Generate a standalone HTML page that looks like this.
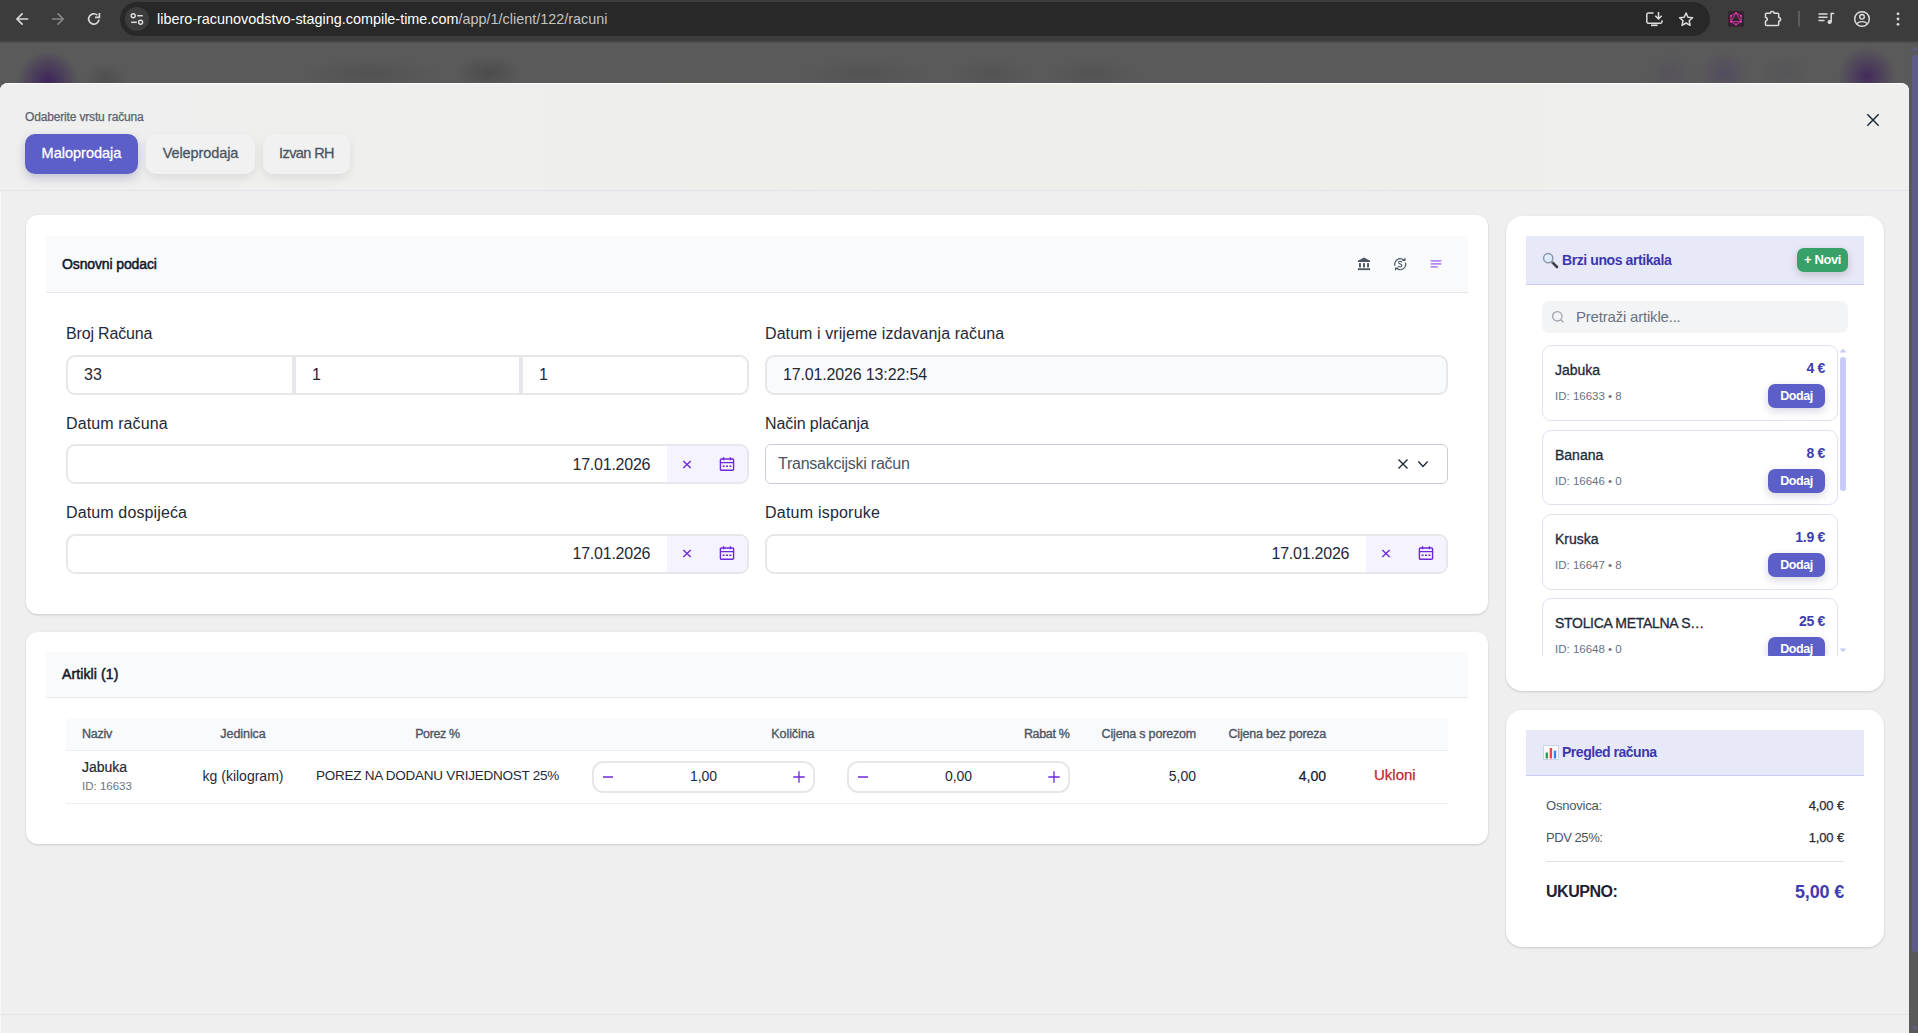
<!DOCTYPE html>
<html lang="hr">
<head>
<meta charset="utf-8">
<title>Računi</title>
<style>
*{box-sizing:border-box;margin:0;padding:0}
html,body{width:1918px;height:1033px;overflow:hidden;background:#5a5a5a}
body{font-family:"Liberation Sans",sans-serif;color:#1f2937;position:relative;-webkit-font-smoothing:antialiased}
.abs{position:absolute}
.t{position:absolute;white-space:nowrap;line-height:1}
/* browser chrome */
#chrome{left:0;top:0;width:1918px;height:41px;background:#3c3c3c}
#chromeline{left:0;top:41px;width:1918px;height:2px;background:linear-gradient(#454545,#505050)}
#urlpill{left:120px;top:2px;width:1590px;height:34px;border-radius:17px;background:#282828}
#sitecirc{left:125px;top:7px;width:24px;height:24px;border-radius:12px;background:#3c3c3c}
#url{left:157px;top:12px;font-size:14.400px;color:#c4c4c4;letter-spacing:0}
#url b{font-weight:normal;color:#fff}
/* page backdrop */
#backdrop{left:0;top:43px;width:1910px;height:990px;background:#5a5a5a;overflow:hidden}
#sbtrack{left:1910px;top:43px;width:8px;height:990px;background:#595959}
#sbthumb{left:1912px;top:55px;width:6px;height:897px;background:#5e5c89;border-radius:3px 0 0 3px}
/* modal */
#modal{left:0;top:83px;width:1909px;height:950px;background:#efefef;border-radius:8px 8px 0 0;overflow:hidden;box-shadow:inset 0 1px 0 rgba(255,255,255,.9),inset 1px 0 0 rgba(255,255,255,.5)}
#mhead{left:0;top:1px;width:1909px;height:107px;background:linear-gradient(90deg,#efefef,#eeeeea 60%,#efefee);border-bottom:1px solid #e2e4ea}
.card{position:absolute;background:#fff;border-radius:12px;box-shadow:0 1px 3px rgba(0,0,0,.10),0 1px 2px rgba(0,0,0,.06)}
.chead{position:absolute;background:#f9fafb;border-bottom:1px solid #e5e7eb}
.ihead{position:absolute;background:#e8e9f8;border-bottom:1px solid #c9ccf2}
.inp{position:absolute;border:2px solid #e5e7eb;background:#fff;border-radius:9px}
.lbl{font-size:16px;color:#1f2937}
.val{font-size:16px;color:#1f2937}
.btn{position:absolute;border-radius:10px;height:40px;top:51px;font-size:14.500px;line-height:38px;text-align:center;white-space:nowrap}
.dt{overflow:hidden}
.dtr{position:absolute;right:0;top:0;width:80px;height:36px;background:#f5f3ff}
.th{font-size:12.500px;font-weight:normal;color:#4b5563;-webkit-text-stroke:0.35px #4b5563}
.ctr{transform:translateX(-50%)}
.rgt{left:auto}
.item{position:absolute;left:0;width:296px;height:75.600px;border:1px solid #e0e1f1;border-radius:9px;background:#fff}
.dodaj{position:absolute;right:12px;top:38px;width:57px;height:24px;border-radius:7px;background:#5b5fc7;color:#fff;font-size:12.500px;font-weight:bold;line-height:24px;text-align:center;letter-spacing:-0.45px;box-shadow:0 3px 8px rgba(60,60,120,.22)}
</style>
</head>
<body>
<div id="chrome" class="abs"></div>
<div id="chromeline" class="abs"></div>
<div id="urlpill" class="abs"></div>
<div id="sitecirc" class="abs"></div>
<svg class="abs" style="left:0;top:0" width="1918" height="41" viewBox="0 0 1918 41" fill="none" stroke-linecap="butt">
  <!-- back -->
  <path d="M28.200 19H17.600M22.600 13.400L17 19l5.600 5.600" stroke="#d6d6d6" stroke-width="1.700"/>
  <!-- forward -->
  <path d="M52 19h10.600M57.600 13.400L63.200 19l-5.600 5.600" stroke="#858585" stroke-width="1.700"/>
  <!-- reload -->
  <path d="M99 19.600A5.200 5.200 0 1 1 97.300 15.100" stroke="#d9d9d9" stroke-width="1.700"/>
  <path d="M99.400 13v4.400h-4.400" stroke="#d9d9d9" stroke-width="1.700"/>
  <!-- tune -->
  <circle cx="133.200" cy="15.700" r="2" stroke="#e0e0e0" stroke-width="1.400"/><path d="M137.200 15.700h5.600" stroke="#e0e0e0" stroke-width="1.500"/>
  <circle cx="140.600" cy="22.300" r="2" stroke="#e0e0e0" stroke-width="1.400"/><path d="M131.200 22.300h5.600" stroke="#e0e0e0" stroke-width="1.500"/>
  <!-- install -->
  <path d="M1653.500 13h-5.300a1.400 1.400 0 0 0-1.400 1.400v7.400a1.400 1.400 0 0 0 1.400 1.400h12.400a1.400 1.400 0 0 0 1.400-1.400v-1.600" stroke="#dcdcdc" stroke-width="1.500"/>
  <path d="M1651 25.300h6.600" stroke="#dcdcdc" stroke-width="1.700"/>
  <path d="M1658.500 12v6.600M1655.300 15.800l3.200 3.200 3.200-3.200" stroke="#dcdcdc" stroke-width="1.500"/>
  <!-- star -->
  <path d="M1686.100 13l1.900 4.200 4.600 0.500-3.400 3.100 0.950 4.500-4.050-2.300-4.050 2.300 0.950-4.500-3.400-3.100 4.600-0.500z" stroke="#dcdcdc" stroke-width="1.500" stroke-linejoin="round"/>
  <!-- graphql ext -->
  <rect x="1728" y="11" width="16" height="16" rx="1.500" fill="#33252f" stroke="none"/>
  <path d="M1736 13l5 8.700h-10zM1736 13l5 2.900v5.800l-5 2.900-5-2.900v-5.800z" stroke="#e535ab" stroke-width="0.900"/>
  <g fill="#e535ab" stroke="none"><circle cx="1736" cy="13" r="1.100"/><circle cx="1741" cy="15.900" r="1.100"/><circle cx="1741" cy="21.700" r="1.100"/><circle cx="1736" cy="24.600" r="1.100"/><circle cx="1731" cy="21.700" r="1.100"/><circle cx="1731" cy="15.900" r="1.100"/></g>
  <!-- puzzle -->
  <path d="M1770.300 13.300a1.900 1.900 0 0 1 3.800 0h3.600a1 1 0 0 1 1 1v3.100a1.900 1.900 0 0 1 0 3.800v3.300a1 1 0 0 1-1 1h-11.200a1 1 0 0 1-1-1v-3.500a1.800 1.800 0 0 0 0-3.600v-3.100a1 1 0 0 1 1-1z" stroke="#dcdcdc" stroke-width="1.500" stroke-linejoin="round"/>
  <!-- separator -->
  <path d="M1799 11v15.600" stroke="#686868" stroke-width="1.500"/>
  <!-- queue music -->
  <path d="M1818.500 14h9M1818.500 17.300h9M1818.500 20.600h6" stroke="#dcdcdc" stroke-width="1.500"/>
  <path d="M1831.200 22V13.600h3" stroke="#dcdcdc" stroke-width="1.500"/>
  <circle cx="1829.600" cy="22" r="2.100" fill="#dcdcdc" stroke="none"/>
  <!-- profile -->
  <circle cx="1862" cy="19" r="7.300" stroke="#dcdcdc" stroke-width="1.500"/>
  <circle cx="1862" cy="16.800" r="2.300" stroke="#dcdcdc" stroke-width="1.400"/>
  <path d="M1856.600 23.800c1.400-1.500 3.300-2.200 5.400-2.200s4 0.700 5.400 2.200" stroke="#dcdcdc" stroke-width="1.400"/>
  <!-- kebab -->
  <g fill="#dcdcdc" stroke="none"><circle cx="1898" cy="13.800" r="1.400"/><circle cx="1898" cy="19" r="1.400"/><circle cx="1898" cy="24.300" r="1.400"/></g>
</svg>
<div id="url" class="t"><b>libero-racunovodstvo-staging.compile-time.com</b>/app/1/client/122/racuni</div>
<div id="backdrop" class="abs">
  <div class="abs" style="left:17px;top:8px;width:62px;height:62px;background:radial-gradient(closest-side,rgba(60,34,90,.95),rgba(60,34,90,.6) 40%,rgba(60,34,90,0))"></div>
  <div class="abs" style="left:84px;top:20px;width:44px;height:34px;background:radial-gradient(closest-side,rgba(74,74,74,.7),rgba(74,74,74,0))"></div>
  <div class="abs" style="left:300px;top:16px;width:140px;height:30px;background:radial-gradient(closest-side,rgba(78,78,78,.7),rgba(78,78,78,0))"></div>
  <div class="abs" style="left:455px;top:12px;width:66px;height:36px;background:radial-gradient(closest-side,rgba(74,74,74,.9),rgba(74,74,74,0))"></div>
  <div class="abs" style="left:800px;top:16px;width:130px;height:30px;background:radial-gradient(closest-side,rgba(80,80,80,.7),rgba(80,80,80,0))"></div>
  <div class="abs" style="left:950px;top:16px;width:80px;height:30px;background:radial-gradient(closest-side,rgba(80,80,80,.7),rgba(80,80,80,0))"></div>
  <div class="abs" style="left:1045px;top:16px;width:95px;height:30px;background:radial-gradient(closest-side,rgba(80,80,80,.7),rgba(80,80,80,0))"></div>
  <div class="abs" style="left:1645px;top:10px;width:50px;height:40px;background:radial-gradient(closest-side,rgba(84,80,90,.7),rgba(84,80,90,0))"></div>
  <div class="abs" style="left:1700px;top:8px;width:50px;height:44px;background:radial-gradient(closest-side,rgba(82,72,96,.8),rgba(82,72,96,0))"></div>
  <div class="abs" style="left:1760px;top:12px;width:50px;height:36px;background:radial-gradient(closest-side,rgba(84,82,86,.7),rgba(84,82,86,0))"></div>
  <div class="abs" style="left:1838px;top:4px;width:58px;height:58px;background:radial-gradient(closest-side,rgba(64,40,92,.95),rgba(64,40,92,.55) 40%,rgba(64,40,92,0))"></div>
</div>
<div id="sbtrack" class="abs"></div>
<div id="sbthumb" class="abs"></div>
<svg class="abs" style="left:1911px;top:46px" width="7" height="5" viewBox="0 0 7 5"><path d="M0.500 4.500L4 0.800l3 3.700z" fill="#5e5c89"/></svg>
<svg class="abs" style="left:1911px;top:1026px" width="7" height="5" viewBox="0 0 7 5"><path d="M0.500 0.500L4 4.200l3-3.700z" fill="#5e5c89"/></svg>

<div id="modal" class="abs">
  <div id="mhead" class="abs"></div>
  <div class="t" style="left:25px;top:28px;font-size:12px;color:#5b6370;letter-spacing:-0.16px;-webkit-text-stroke:0.25px #5b6370">Odaberite vrstu računa</div>
  <div class="btn" style="left:25px;width:113px;background:#5b5fc7;color:#fff;-webkit-text-stroke:0.3px #fff;box-shadow:0 4px 10px rgba(60,60,120,.25)">Maloprodaja</div>
  <div class="btn" style="left:146px;width:109px;background:#f1f1f1;color:#4b5563;letter-spacing:-0.1px;-webkit-text-stroke:0.3px #4b5563;box-shadow:0 4px 10px rgba(0,0,0,.08)">Veleprodaja</div>
  <div class="btn" style="left:263px;width:87px;background:#f1f1f1;color:#4b5563;letter-spacing:-0.6px;-webkit-text-stroke:0.3px #4b5563;box-shadow:0 4px 10px rgba(0,0,0,.08)">Izvan RH</div>

  <svg class="abs" style="left:1866px;top:30px" width="14" height="14" viewBox="0 0 14 14"><path d="M1.300 1.300l11.400 11.400M12.700 1.300L1.300 12.700" stroke="#1e293b" stroke-width="1.500" fill="none"/></svg>
  <!-- CARD 1 -->
  <div class="card" id="card1" style="left:26px;top:132px;width:1462px;height:399px">
    <div class="chead" style="left:20px;top:21px;width:1422px;height:57px"></div>
    <div class="t" style="left:36px;top:42px;font-size:14px;font-weight:normal;color:#111827;letter-spacing:-0.12px;-webkit-text-stroke:0.5px #111827">Osnovni podaci</div>
    <!-- header icons -->
    <svg class="abs" style="left:1331px;top:42px" width="14" height="14" viewBox="0 0 14 14"><path d="M7 0.600L0.900 3.700V5.100H13.100V3.700Z" fill="#4b5563"/><rect x="2" y="6.100" width="1.900" height="4.300" fill="#4b5563"/><rect x="6.050" y="6.100" width="1.900" height="4.300" fill="#4b5563"/><rect x="10.100" y="6.100" width="1.900" height="4.300" fill="#4b5563"/><rect x="0.900" y="11.300" width="12.200" height="1.800" fill="#4b5563"/></svg>
    <svg class="abs" style="left:1366.800px;top:41.800px" width="14.400" height="14.400" viewBox="0 0 16 16" fill="none" stroke="#4b5563" stroke-width="1.350"><path d="M2.200 9.800A6 6 0 0 1 11.800 3.400"/><path d="M13.800 6.200A6 6 0 0 1 4.200 12.600"/><path d="M10 4.400h3.800V0.600z" fill="#4b5563" stroke="none"/><path d="M6 11.600H2.200v3.800z" fill="#4b5563" stroke="none"/><path d="M9.900 5.800C9.500 5.100 8.800 4.700 8 4.700c-1.100 0-1.800 0.600-1.800 1.500 0 2.100 3.700 1.100 3.700 3.300 0 1-0.800 1.600-1.900 1.600-1 0-1.700-0.400-2-1.300" stroke-width="1.200"/></svg>
    <svg class="abs" style="left:1404px;top:45px" width="12" height="8" viewBox="0 0 12 8"><rect x="0.700" y="0.200" width="10.600" height="1.400" fill="#a46cf3"/><rect x="0.700" y="3.200" width="10.600" height="1.400" fill="#a46cf3"/><rect x="0.700" y="6.200" width="7" height="1.400" fill="#a46cf3"/></svg>

    <!-- row 1 -->
    <div class="t lbl" style="left:40px;top:111px;letter-spacing:-0.16px">Broj Računa</div>
    <div class="inp" style="left:40px;top:140px;width:228px;height:40px;border-radius:9px 0 0 9px"></div>
    <div class="inp" style="left:268px;top:140px;width:227px;height:40px;border-radius:0"></div>
    <div class="inp" style="left:495px;top:140px;width:228px;height:40px;border-radius:0 9px 9px 0"></div>
    <div class="t val" style="left:58px;top:152px">33</div>
    <div class="t val" style="left:286px;top:152px">1</div>
    <div class="t val" style="left:513px;top:152px">1</div>
    <div class="t lbl" style="left:739px;top:111px;letter-spacing:0.08px">Datum i vrijeme izdavanja računa</div>
    <div class="inp" style="left:739px;top:140px;width:683px;height:40px;background:#f9fafb"></div>
    <div class="t val" style="left:757px;top:152px;letter-spacing:-0.15px">17.01.2026 13:22:54</div>

    <!-- row 2 -->
    <div class="t lbl" style="left:40px;top:201px;letter-spacing:0.1px">Datum računa</div>
    <div class="inp dt" style="left:40px;top:229px;width:683px;height:40px"><div class="dtr"></div></div>
    <div class="t val" style="left:546.500px;top:242px;letter-spacing:-0.23px">17.01.2026</div>
    <svg class="abs xi" style="left:655px;top:243px" width="12" height="12" viewBox="0 0 12 12"><path d="M2.300 2.900l7.400 7M9.700 2.900L2.300 9.900" stroke="#6d28d9" stroke-width="1.350" fill="none"/></svg>
    <svg class="abs ci" style="left:693px;top:240.500px" width="16" height="16" viewBox="0 0 16 16" fill="none" stroke="#6d28d9" stroke-width="1.400"><rect x="1.400" y="3" width="13.200" height="11.300" rx="1"/><path d="M1.400 6.600h13.200M4.600 1.300v3M11.400 1.300v3"/><path d="M3.600 10.300h2M7 10.300h2M10.400 10.300h2" stroke-width="1.500"/></svg>
    <div class="t lbl" style="left:739px;top:201px;letter-spacing:-0.08px">Način plaćanja</div>
    <div class="abs" style="left:739px;top:229px;width:683px;height:40px;border:1px solid #c9cdd8;border-radius:6px;background:#fff"></div>
    <div class="t" style="left:752px;top:241px;font-size:16px;color:#4b5563;letter-spacing:-0.25px">Transakcijski račun</div>
    <svg class="abs" style="left:1371px;top:243px" width="12" height="12" viewBox="0 0 12 12"><path d="M1.500 1.600l9 9M10.500 1.600l-9 9" stroke="#1f2937" stroke-width="1.400" fill="none"/></svg>
    <svg class="abs" style="left:1391px;top:245px" width="12" height="8" viewBox="0 0 12 8"><path d="M1.400 1.600L6 6.400l4.600-4.800" stroke="#1f2937" stroke-width="1.400" fill="none"/></svg>

    <!-- row 3 -->
    <div class="t lbl" style="left:40px;top:290px;letter-spacing:0.13px">Datum dospijeća</div>
    <div class="inp dt" style="left:40px;top:319px;width:683px;height:40px"><div class="dtr"></div></div>
    <div class="t val" style="left:546.500px;top:331px;letter-spacing:-0.23px">17.01.2026</div>
    <svg class="abs xi" style="left:655px;top:332px" width="12" height="12" viewBox="0 0 12 12"><path d="M2.300 2.900l7.400 7M9.700 2.900L2.300 9.900" stroke="#6d28d9" stroke-width="1.350" fill="none"/></svg>
    <svg class="abs ci" style="left:693px;top:329.500px" width="16" height="16" viewBox="0 0 16 16" fill="none" stroke="#6d28d9" stroke-width="1.400"><rect x="1.400" y="3" width="13.200" height="11.300" rx="1"/><path d="M1.400 6.600h13.200M4.600 1.300v3M11.400 1.300v3"/><path d="M3.600 10.300h2M7 10.300h2M10.400 10.300h2" stroke-width="1.500"/></svg>
    <div class="t lbl" style="left:739px;top:290px;letter-spacing:0.22px">Datum isporuke</div>
    <div class="inp dt" style="left:739px;top:319px;width:683px;height:40px"><div class="dtr"></div></div>
    <div class="t val" style="left:1245.500px;top:331px;letter-spacing:-0.23px">17.01.2026</div>
    <svg class="abs xi" style="left:1354px;top:332px" width="12" height="12" viewBox="0 0 12 12"><path d="M2.300 2.900l7.400 7M9.700 2.900L2.300 9.900" stroke="#6d28d9" stroke-width="1.350" fill="none"/></svg>
    <svg class="abs ci" style="left:1392px;top:329.500px" width="16" height="16" viewBox="0 0 16 16" fill="none" stroke="#6d28d9" stroke-width="1.400"><rect x="1.400" y="3" width="13.200" height="11.300" rx="1"/><path d="M1.400 6.600h13.200M4.600 1.300v3M11.400 1.300v3"/><path d="M3.600 10.300h2M7 10.300h2M10.400 10.300h2" stroke-width="1.500"/></svg>
  </div>
  <!-- CARD 2 -->
  <div class="card" id="card2" style="left:26px;top:549px;width:1462px;height:212px">
    <div class="chead" style="left:20px;top:20px;width:1422px;height:46px"></div>
    <div class="t" style="left:36px;top:35px;font-size:14px;font-weight:normal;color:#111827;letter-spacing:0.12px;-webkit-text-stroke:0.5px #111827">Artikli (1)</div>
    <div class="abs" style="left:40px;top:86px;width:1382px;height:33px;background:#f9fafb;border-bottom:1px solid #eef0f3"></div>
    <div class="t th" style="left:56px;top:96px;letter-spacing:-0.23px">Naziv</div>
    <div class="t th ctr" style="left:217px;top:96px;letter-spacing:-0.07px">Jedinica</div>
    <div class="t th ctr" style="left:411.500px;top:96px;letter-spacing:-0.36px">Porez %</div>
    <div class="t th rgt" style="right:673.500px;top:96px;letter-spacing:-0.07px">Količina</div>
    <div class="t th rgt" style="right:418.500px;top:96px;letter-spacing:-0.34px">Rabat %</div>
    <div class="t th rgt" style="right:292px;top:96px;letter-spacing:-0.18px">Cijena s porezom</div>
    <div class="t th rgt" style="right:162px;top:96px;letter-spacing:-0.19px">Cijena bez poreza</div>
    <div class="abs" style="left:40px;top:171px;width:1382px;height:1px;background:#eceef1"></div>
    <div class="t" style="left:56px;top:128px;font-size:14px;color:#1f2937;-webkit-text-stroke:0.2px #1f2937">Jabuka</div>
    <div class="t" style="left:56px;top:148.500px;font-size:11.500px;color:#6b7280">ID: 16633</div>
    <div class="t ctr" style="left:217px;top:137px;font-size:14px;color:#1f2937">kg (kilogram)</div>
    <div class="t ctr" style="left:411.500px;top:137px;font-size:13.500px;letter-spacing:-0.24px;color:#1f2937">POREZ NA DODANU VRIJEDNOST 25%</div>
    <div class="inp" style="left:566px;top:129px;width:223px;height:32px;border-radius:11px"></div>
    <svg class="abs" style="left:576px;top:138.500px" width="12" height="12" viewBox="0 0 12 12"><path d="M1 6h10" stroke="#6d28d9" stroke-width="1.500"/></svg>
    <svg class="abs" style="left:767px;top:138.500px" width="12" height="12" viewBox="0 0 12 12"><path d="M0.300 6h11.400M6 0.300v11.400" stroke="#6d28d9" stroke-width="1.300"/></svg>
    <div class="t ctr" style="left:677.500px;top:137px;font-size:14px;color:#1f2937">1,00</div>
    <div class="inp" style="left:821px;top:129px;width:223px;height:32px;border-radius:11px"></div>
    <svg class="abs" style="left:831px;top:138.500px" width="12" height="12" viewBox="0 0 12 12"><path d="M1 6h10" stroke="#6d28d9" stroke-width="1.500"/></svg>
    <svg class="abs" style="left:1022px;top:138.500px" width="12" height="12" viewBox="0 0 12 12"><path d="M0.300 6h11.400M6 0.300v11.400" stroke="#6d28d9" stroke-width="1.300"/></svg>
    <div class="t ctr" style="left:932.500px;top:137px;font-size:14px;color:#1f2937">0,00</div>
    <div class="t rgt" style="right:292px;top:137px;font-size:14px;color:#1f2937">5,00</div>
    <div class="t rgt" style="right:162px;top:137px;font-size:14px;color:#111827;-webkit-text-stroke:0.2px #111827">4,00</div>
    <div class="t" style="left:1348px;top:135px;font-size:15px;color:#c0262d;-webkit-text-stroke:0.25px #c0262d">Ukloni</div>
  </div>
  <!-- RIGHT 1 -->
  <div class="card" id="rcard1" style="left:1506px;top:133px;width:378px;height:475px;border-radius:16px">
    <div class="ihead" style="left:20px;top:20px;width:338px;height:49px"></div>
    <svg class="abs" style="left:36px;top:36px" width="17" height="17" viewBox="0 0 17 17"><path d="M9.400 9.400l5.600 5.600" stroke="#3f3f46" stroke-width="2.600" stroke-linecap="round"/><path d="M8.600 8.600l2 2" stroke="#9ca3af" stroke-width="1.600"/><circle cx="6.200" cy="6.200" r="4.600" fill="#dbeafe" stroke="#8b98a8" stroke-width="1.500"/><path d="M3.600 5.600a2.800 2.800 0 0 1 2.400-2.200" stroke="#fff" stroke-width="1" fill="none"/></svg>
    <div class="t" style="left:56px;top:37px;font-size:14px;font-weight:bold;color:#3b36ad;letter-spacing:-0.41px">Brzi unos artikala</div>
    <div class="abs" style="left:291px;top:32px;width:51px;height:24px;border-radius:7px;background:#38a169;box-shadow:0 3px 8px rgba(0,0,0,.18);color:#fff;font-size:13px;font-weight:bold;line-height:24px;text-align:center;letter-spacing:-0.4px">+ Novi</div>
    <div class="abs" style="left:36px;top:85px;width:306px;height:32px;border-radius:7px;background:#f3f4f6"></div>
    <svg class="abs" style="left:44px;top:93px" width="16" height="16" viewBox="0 0 16 16" fill="none" stroke="#9ca3af" stroke-width="1.300"><circle cx="7.300" cy="7.300" r="4.700"/><path d="M10.800 10.800l2.600 2.600"/></svg>
    <div class="t" style="left:70px;top:93px;font-size:15px;color:#6b7280;letter-spacing:-0.2px">Pretraži artikle...</div>
    <div class="abs" id="list" style="left:36px;top:129.300px;width:306px;height:311px;overflow:hidden">
      <div class="item" style="top:0px">
        <div class="t" style="left:12px;top:17px;font-size:14px;color:#1f2937;-webkit-text-stroke:0.3px #1f2937">Jabuka</div>
        <div class="t rgt" style="right:12px;top:15px;font-size:14px;font-weight:bold;color:#3f3bb0;letter-spacing:-0.3px">4 €</div>
        <div class="t" style="left:12px;top:45px;font-size:11.500px;color:#6b7280">ID: 16633 • 8</div>
        <div class="dodaj">Dodaj</div>
      </div>
      <div class="item" style="top:84.400px">
        <div class="t" style="left:12px;top:17px;font-size:14px;color:#1f2937;-webkit-text-stroke:0.3px #1f2937">Banana</div>
        <div class="t rgt" style="right:12px;top:15px;font-size:14px;font-weight:bold;color:#3f3bb0;letter-spacing:-0.3px">8 €</div>
        <div class="t" style="left:12px;top:45px;font-size:11.500px;color:#6b7280">ID: 16646 • 0</div>
        <div class="dodaj">Dodaj</div>
      </div>
      <div class="item" style="top:168.800px">
        <div class="t" style="left:12px;top:17px;font-size:14px;color:#1f2937;-webkit-text-stroke:0.3px #1f2937">Kruska</div>
        <div class="t rgt" style="right:12px;top:15px;font-size:14px;font-weight:bold;color:#3f3bb0;letter-spacing:-0.3px">1.9 €</div>
        <div class="t" style="left:12px;top:45px;font-size:11.500px;color:#6b7280">ID: 16647 • 8</div>
        <div class="dodaj">Dodaj</div>
      </div>
      <div class="item" style="top:253.200px">
        <div class="t" style="left:12px;top:17px;font-size:14px;letter-spacing:-0.3px;color:#1f2937;-webkit-text-stroke:0.3px #1f2937">STOLICA METALNA S…</div>
        <div class="t rgt" style="right:12px;top:15px;font-size:14px;font-weight:bold;color:#3f3bb0;letter-spacing:-0.3px">25 €</div>
        <div class="t" style="left:12px;top:45px;font-size:11.500px;color:#6b7280">ID: 16648 • 0</div>
        <div class="dodaj">Dodaj</div>
      </div>
      <div class="abs" style="left:298px;top:12px;width:6px;height:134px;border-radius:3px;background:#c9caf8"></div>
      <svg class="abs" style="left:297px;top:3px" width="8" height="5" viewBox="0 0 8 5"><path d="M0.500 4.500L4 0.800l3.500 3.700z" fill="#c9caf8"/></svg>
      <svg class="abs" style="left:297px;top:303px" width="8" height="5" viewBox="0 0 8 5"><path d="M0.500 0.500L4 4.200l3.500-3.700z" fill="#c9caf8"/></svg>
    </div>
  </div>
  <!-- RIGHT 2 -->
  <div class="card" id="rcard2" style="left:1506px;top:627px;width:378px;height:237px;border-radius:16px">
    <div class="ihead" style="left:20px;top:20px;width:338px;height:46px"></div>
    <svg class="abs" style="left:37px;top:35px" width="16" height="15" viewBox="0 0 16 15"><rect x="0.500" y="0.500" width="15" height="14" fill="#f8fafc" stroke="#cbd5e1" stroke-width="1"/><rect x="2.600" y="7.500" width="2.400" height="6" fill="#22a559"/><rect x="6.700" y="3" width="2.400" height="10.500" fill="#ef4444"/><rect x="10.800" y="5.500" width="2.400" height="8" fill="#3b82f6"/></svg>
    <div class="t" style="left:56px;top:35px;font-size:14px;font-weight:bold;color:#3b36ad;letter-spacing:-0.47px">Pregled računa</div>
    <div class="t" style="left:40px;top:89px;font-size:13px;letter-spacing:-0.22px;color:#4b5563">Osnovica:</div>
    <div class="t rgt" style="right:40px;top:89px;font-size:13px;letter-spacing:-0.15px;color:#1f2937;-webkit-text-stroke:0.25px #1f2937">4,00 €</div>
    <div class="t" style="left:40px;top:121px;font-size:13px;letter-spacing:-0.44px;color:#4b5563">PDV 25%:</div>
    <div class="t rgt" style="right:40px;top:121px;font-size:13px;letter-spacing:-0.15px;color:#1f2937;-webkit-text-stroke:0.25px #1f2937">1,00 €</div>
    <div class="abs" style="left:40px;top:151px;width:298px;height:1px;background:#dfe1e6"></div>
    <div class="t" style="left:40px;top:174px;font-size:16px;font-weight:bold;color:#1e2235;letter-spacing:-0.46px">UKUPNO:</div>
    <div class="t rgt" style="right:40px;top:173px;font-size:18px;font-weight:bold;color:#3f3bb0;letter-spacing:-0.18px">5,00 €</div>
  </div>
  <!-- footer -->
  <div class="abs" style="left:0;top:931px;width:1909px;height:1px;background:#e4e5e8"></div>
</div>
</body>
</html>
